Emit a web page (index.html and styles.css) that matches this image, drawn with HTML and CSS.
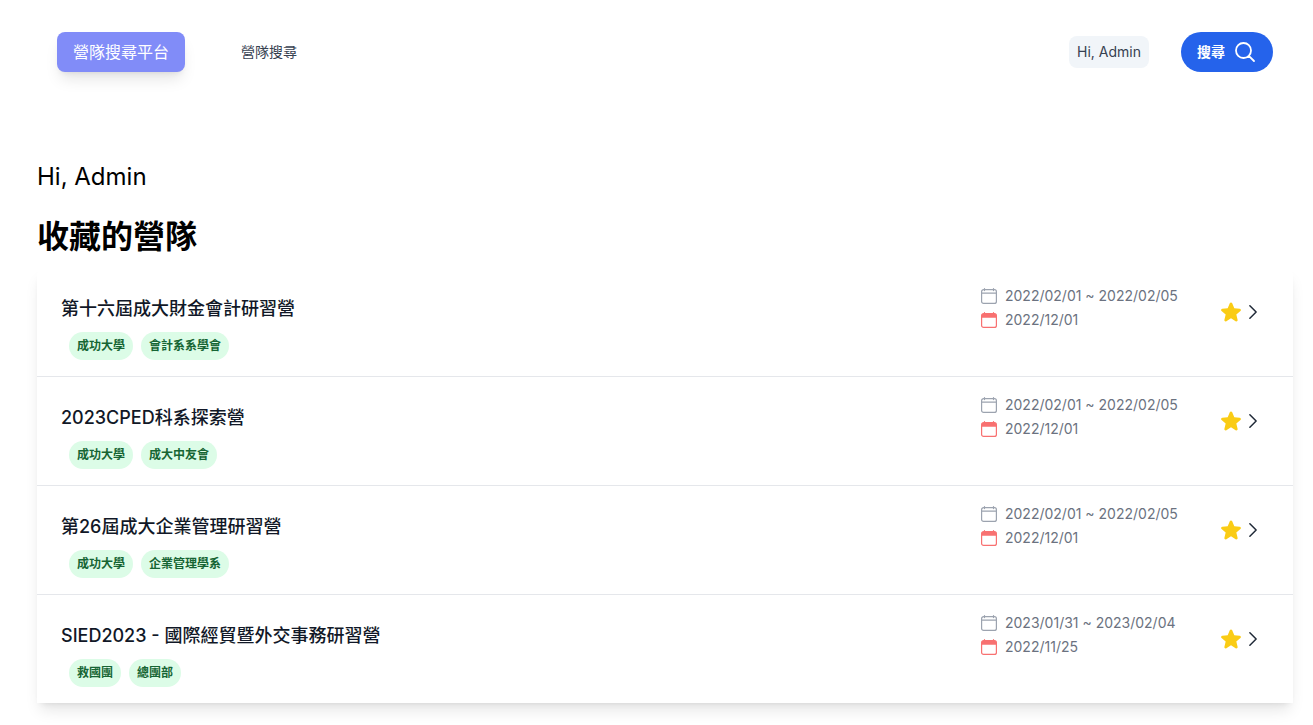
FILE: index.html
```html
<!DOCTYPE html>
<html lang="zh-Hant">
<head>
    <meta charset="UTF-8">
    <meta name="viewport" content="width=device-width, initial-scale=1.0">
    <title>營隊搜尋平台</title>
    <link rel="stylesheet" href="styles.css">
</head>
<body>
    <svg class="sprite" aria-hidden="true">
        <symbol id="calendar" viewBox="0 0 16 16">
            <path d="M3.5.6v2M12.5.6v2M.6 5.2h14.8M2.6 1.7h10.8a2 2 0 0 1 2 2v9.7a2 2 0 0 1-2 2H2.6a2 2 0 0 1-2-2V3.7a2 2 0 0 1 2-2z" fill="none" stroke="currentColor" stroke-width="1.2" stroke-linecap="round"/>
        </symbol>
        <symbol id="deadline" viewBox="0 0 16 16">
            <path d="M.6 5.8V3.7a2 2 0 0 1 2-2h10.8a2 2 0 0 1 2 2v2.1z"/>
            <path d="M3.5.6v2M12.5.6v2M2.6 1.7h10.8a2 2 0 0 1 2 2v9.7a2 2 0 0 1-2 2H2.6a2 2 0 0 1-2-2V3.7a2 2 0 0 1 2-2z" fill="none" stroke="currentColor" stroke-width="1.2" stroke-linecap="round"/>
        </symbol>
        <symbol id="star" viewBox="0 0 24 24">
            <path d="M10.788 3.21c.448-1.077 1.976-1.077 2.424 0l2.082 5.007 5.404.433c1.164.093 1.636 1.545.749 2.305l-4.117 3.527 1.257 5.273c.271 1.136-.964 2.033-1.96 1.425L12 18.354 7.373 21.18c-.996.608-2.231-.29-1.96-1.425l1.257-5.273-4.117-3.527c-.887-.76-.415-2.212.749-2.305l5.404-.433 2.082-5.006z"/>
        </symbol>
        <symbol id="chevron" viewBox="0 0 24 24">
            <path d="M8.25 4.5l7.5 7.5-7.5 7.5" fill="none" stroke="currentColor" stroke-width="1.8" stroke-linecap="round" stroke-linejoin="round"/>
        </symbol>
    </svg>

    <header class="header">
        <a href="#" class="brand">營隊搜尋平台</a>
        <nav class="nav">
            <a href="#" class="nav-link">營隊搜尋</a>
        </nav>
        <a href="#" class="user">Hi, Admin</a>
        <button type="button" class="search-btn">
            搜尋
            <svg class="search-icon" viewBox="0 0 24 24" aria-hidden="true">
                <path d="M21 21l-5.197-5.197m0 0A7.5 7.5 0 105.196 5.196a7.5 7.5 0 0010.607 10.607z"/>
            </svg>
        </button>
    </header>

    <main class="main">
        <p class="greeting">Hi, Admin</p>
        <h1 class="title">收藏的營隊</h1>

        <ul class="camp-list">
            <li class="camp">
                <div class="camp-info">
                    <h2 class="camp-name"><a href="#">第十六屆成大財金會計研習營</a></h2>
                    <div class="tags">
                        <span class="tag">成功大學</span>
                        <span class="tag">會計系系學會</span>
                    </div>
                </div>
                <div class="dates">
                    <p class="date"><svg class="date-icon"><use href="#calendar"/></svg>2022/02/01 ~ 2022/02/05</p>
                    <p class="date"><svg class="date-icon deadline"><use href="#deadline"/></svg>2022/12/01</p>
                </div>
                <div class="actions">
                    <button type="button" class="star-btn" aria-label="取消收藏"><svg class="star"><use href="#star"/></svg></button>
                    <a href="#" class="more" aria-label="查看營隊"><svg class="chevron"><use href="#chevron"/></svg></a>
                </div>
            </li>

            <li class="camp">
                <div class="camp-info">
                    <h2 class="camp-name"><a href="#">2023CPED科系探索營</a></h2>
                    <div class="tags">
                        <span class="tag">成功大學</span>
                        <span class="tag">成大中友會</span>
                    </div>
                </div>
                <div class="dates">
                    <p class="date"><svg class="date-icon"><use href="#calendar"/></svg>2022/02/01 ~ 2022/02/05</p>
                    <p class="date"><svg class="date-icon deadline"><use href="#deadline"/></svg>2022/12/01</p>
                </div>
                <div class="actions">
                    <button type="button" class="star-btn" aria-label="取消收藏"><svg class="star"><use href="#star"/></svg></button>
                    <a href="#" class="more" aria-label="查看營隊"><svg class="chevron"><use href="#chevron"/></svg></a>
                </div>
            </li>

            <li class="camp">
                <div class="camp-info">
                    <h2 class="camp-name"><a href="#">第26屆成大企業管理研習營</a></h2>
                    <div class="tags">
                        <span class="tag">成功大學</span>
                        <span class="tag">企業管理學系</span>
                    </div>
                </div>
                <div class="dates">
                    <p class="date"><svg class="date-icon"><use href="#calendar"/></svg>2022/02/01 ~ 2022/02/05</p>
                    <p class="date"><svg class="date-icon deadline"><use href="#deadline"/></svg>2022/12/01</p>
                </div>
                <div class="actions">
                    <button type="button" class="star-btn" aria-label="取消收藏"><svg class="star"><use href="#star"/></svg></button>
                    <a href="#" class="more" aria-label="查看營隊"><svg class="chevron"><use href="#chevron"/></svg></a>
                </div>
            </li>

            <li class="camp">
                <div class="camp-info">
                    <h2 class="camp-name"><a href="#">SIED2023 - 國際經貿暨外交事務研習營</a></h2>
                    <div class="tags">
                        <span class="tag">救國團</span>
                        <span class="tag">總團部</span>
                    </div>
                </div>
                <div class="dates">
                    <p class="date"><svg class="date-icon"><use href="#calendar"/></svg>2023/01/31 ~ 2023/02/04</p>
                    <p class="date"><svg class="date-icon deadline"><use href="#deadline"/></svg>2022/11/25</p>
                </div>
                <div class="actions">
                    <button type="button" class="star-btn" aria-label="取消收藏"><svg class="star"><use href="#star"/></svg></button>
                    <a href="#" class="more" aria-label="查看營隊"><svg class="chevron"><use href="#chevron"/></svg></a>
                </div>
            </li>
        </ul>
    </main>
</body>
</html>
```

FILE: styles.css
```css
* {
    margin: 0;
    padding: 0;
    box-sizing: border-box;
}

body {
    font-family: Inter, "Noto Sans CJK TC", sans-serif;
    background: #fff;
    color: #000;
    padding: 32px 20px 22px 37px;
}

a {
    color: inherit;
    text-decoration: none;
}

button {
    font-family: inherit;
    border: none;
    background: none;
    cursor: pointer;
}

svg {
    display: block;
    flex-shrink: 0;
    fill: currentColor;
}

.sprite {
    display: none;
}

/* Header */
.header {
    display: flex;
    align-items: center;
    padding: 0 20px;
}

.brand {
    padding: 8px 16px;
    border-radius: 8px;
    background: #818cf8;
    color: #fff;
    font-size: 16px;
    line-height: 24px;
    box-shadow: 0 10px 15px -3px rgba(0, 0, 0, 0.1), 0 4px 6px -4px rgba(0, 0, 0, 0.1);
}

.nav {
    flex: 1;
    margin-left: 56px;
}

.nav-link,
.user {
    color: #374151;
    font-size: 14px;
    line-height: 24px;
}

.user {
    padding: 4px 8px;
    border-radius: 8px;
    background: #f1f5f9;
    margin-right: 32px;
}

.search-btn {
    display: flex;
    align-items: center;
    gap: 8px;
    padding: 8px 16px;
    border-radius: 20px;
    background: #2563eb;
    color: #fff;
    font-size: 14px;
    font-weight: 600;
    line-height: 24px;
}

.search-icon {
    width: 24px;
    height: 24px;
    fill: none;
    stroke: currentColor;
    stroke-width: 1.8;
    stroke-linecap: round;
    stroke-linejoin: round;
}

/* Saved camps */
.main {
    padding-top: 89px;
}

.greeting {
    font-size: 24px;
    line-height: 32px;
}

.title {
    margin: 24px 0 11px;
    font-size: 32px;
    font-weight: 600;
    line-height: 40px;
}

.camp-list {
    list-style: none;
    background: #fff;
    border-radius: 8px 8px 0 0;
    box-shadow: 0 10px 15px -3px rgba(0, 0, 0, 0.1), 0 4px 6px -4px rgba(0, 0, 0, 0.1);
}

.camp {
    display: flex;
    align-items: flex-start;
    padding: 16px 30px 16px 24px;
}

.camp + .camp {
    border-top: 1px solid #e5e7eb;
}

.camp-info {
    flex: 1;
    padding-top: 11px;
}

.camp-name {
    color: #111827;
    font-size: 18px;
    font-weight: 500;
    line-height: 28px;
}

.tags {
    display: flex;
    gap: 8px;
    margin: 9px 0 0 8px;
}

.tag {
    padding: 4px 8px;
    border-radius: 14px;
    background: #dcfce7;
    color: #166534;
    font-size: 12px;
    font-weight: 600;
    line-height: 20px;
}

.dates {
    width: 238px;
}

.date {
    display: flex;
    align-items: center;
    gap: 8px;
    color: #6b7280;
    font-size: 14px;
    line-height: 24px;
}

.date-icon {
    width: 16px;
    height: 16px;
    color: #9ca3af;
}

.date-icon.deadline {
    color: #f87171;
}

.actions {
    display: flex;
    align-items: center;
    height: 56px;
}

.star {
    width: 24px;
    height: 24px;
    color: #facc15;
}

.chevron {
    width: 20px;
    height: 20px;
    color: #1f2937;
}

@media (max-width: 768px) {
    .camp {
        flex-wrap: wrap;
    }

    .camp-info {
        flex-basis: 100%;
        margin-bottom: 16px;
    }
}
```
